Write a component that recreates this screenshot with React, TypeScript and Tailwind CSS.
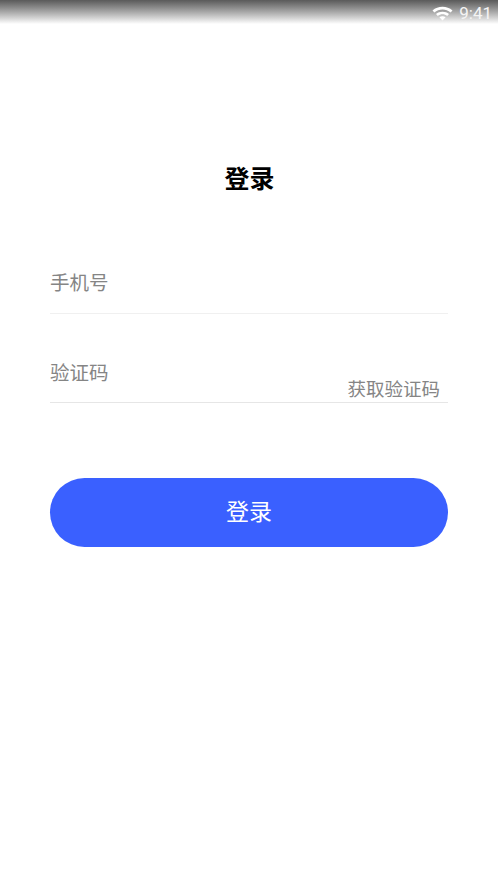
const cjk = "font-['Noto_Sans_CJK_SC','Noto_Sans',sans-serif]";

function StatusBar() {
  return (
    <div className="h-6 bg-gradient-to-b from-[#5a5a5a] to-white flex items-center justify-end pr-[6px] text-white">
      <svg width="21" height="16" viewBox="0 0 21 16" className="mr-[6px] mt-[1px]" fill="none">
        <path d="M0.5 5.5C6 0.5 15 0.5 20.5 5.5L18.6 7.6C14 3.6 7 3.6 2.4 7.6Z" fill="white" />
        <path d="M4 9C7.6 5.9 13.4 5.9 17 9L15.2 11C12.5 8.8 8.5 8.8 5.8 11Z" fill="white" />
        <path d="M7.4 12.3C9.2 10.9 11.8 10.9 13.6 12.3L10.5 15.6Z" fill="white" />
      </svg>
      <span className="font-['Roboto',sans-serif] text-[17px] leading-6 mt-[2px] text-[#f4f4f4]">9:41</span>
    </div>
  );
}

export default function App() {
  return (
    <div className={`h-[885px] w-[498px] bg-white ${cjk}`}>
      <StatusBar />

      <div className="px-[50px]">
        <h1 className="mt-[135px] pl-[1px] text-center text-[25px] leading-9 font-bold text-black">登录</h1>

        {/* Form */}
        <div className="mt-[73px] h-[46px] border-b border-[#f0f0f0] text-[19.5px] leading-7 text-[#858585]">手机号</div>

        <div className="mt-[45px] h-[44px] border-b border-[#e6e6e6] flex justify-between text-[#858585]">
          <span className="text-[19.5px] leading-[26px]">验证码</span>
          <span className="text-[18.5px] leading-6 mt-[17px] mr-2">获取验证码</span>
        </div>

        <button className="mt-[75px] h-[69px] w-full rounded-full bg-[#3a60ff] pb-[4px] text-[23px] text-white">登录</button>
      </div>
    </div>
  );
}
